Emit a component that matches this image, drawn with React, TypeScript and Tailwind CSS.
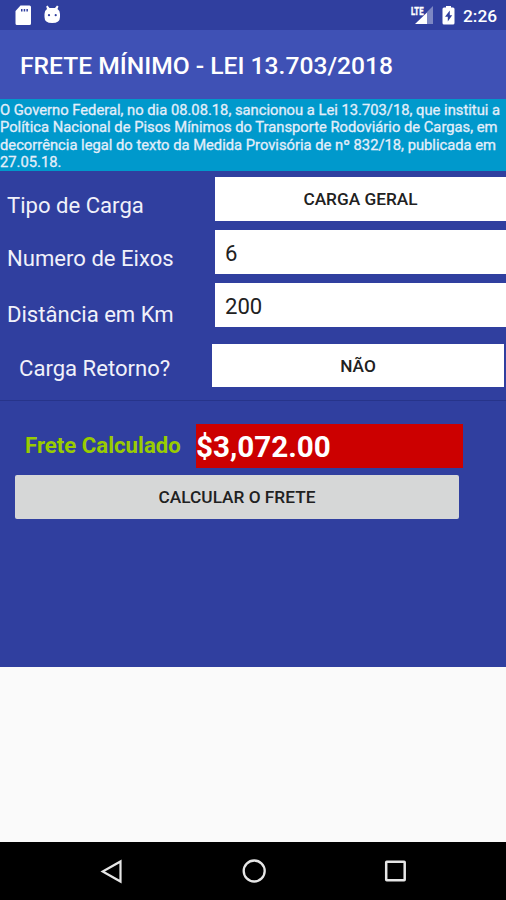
function StatusBar() {
  return (
    <div className="flex h-[30px] items-center bg-[#303f9f] pl-[14px] pr-[9px] text-white">
      <svg className="h-[30px] w-[19px]" viewBox="0 0 19 30" fill="currentColor">
        <path
          fillRule="evenodd"
          d="M6.500 5.500h9q1.500 0 1.500 1.500v16.500q0 1.500-1.500 1.500h-12.500q-1.500 0-1.500-1.500V11zM7 9v2.500h1.500V9zM9.700 9v2.500h1.500V9zM12.400 9v2.500h1.500V9z"
        />
      </svg>
      <svg className="ml-[9px] h-[30px] w-[22px]" viewBox="0 0 22 30">
        <path
          fill="currentColor"
          d="M5.500 5.500 7.500 8h5.500l2-2.500 1.500 1-1 2.500Q18 10.500 18 14v3q0 6-7.800 6T2.500 17v-3q0-3.500 2.500-5L4.200 6.500z"
        />
        <circle cx="7" cy="15.200" r="1.100" fill="#303f9f" />
        <circle cx="13.700" cy="15.200" r="1.100" fill="#303f9f" />
      </svg>
      <svg className="ml-auto h-[30px] w-[25px]" viewBox="0 0 25 30">
        <path d="M23 6v18h-6V12z" fill="#7d87c3" />
        <path d="M17 12.500V24H5z" fill="currentColor" />
        <text
          x="1"
          y="14.500"
          fill="currentColor"
          stroke="currentColor"
          strokeWidth=".4"
          fontFamily="Roboto, sans-serif"
          fontSize="10.500"
          fontWeight="700"
          textLength="12.500"
          lengthAdjust="spacingAndGlyphs"
        >
          LTE
        </text>
      </svg>
      <svg className="ml-[7px] h-[30px] w-[13px]" viewBox="0 0 13 30">
        <path
          d="M4 6h5v1.500h2q1.500 0 1.500 1.500v14q0 1.500-1.500 1.500H2Q.5 24.500.5 23V9Q.5 7.500 2 7.500h2z"
          fill="currentColor"
        />
        <path d="M7.800 10.500 3 16.800h2.800v4.700l4.400-6.300H7.800z" fill="#303f9f" />
      </svg>
      <span className="ml-[8px] pt-px text-[17.250px] font-medium leading-[30px]">
        2:26
      </span>
    </div>
  );
}

function NavigationBar() {
  return (
    <div className="flex h-[58px] items-center justify-between bg-black pl-[98px] pr-[97px] text-[#e6e6e6]">
      <svg className="size-7" viewBox="0 0 28 28" fill="none" stroke="currentColor" strokeWidth="2.200">
        <path d="M22.500 4.500v20L4.700 14.500z" />
      </svg>
      <svg className="size-7" viewBox="0 0 28 28" fill="none" stroke="currentColor" strokeWidth="2.300">
        <circle cx="14.200" cy="14" r="10.500" />
      </svg>
      <svg className="size-7" viewBox="0 0 28 28" fill="none" stroke="currentColor" strokeWidth="2.500">
        <rect x="5.200" y="4.700" width="18.500" height="18.500" rx=".5" />
      </svg>
    </div>
  );
}

function App() {
  return (
    <div
      className="flex h-[900px] w-[506px] flex-col overflow-hidden bg-[#fafafa]"
      style={{ fontFamily: "Roboto, sans-serif" }}
    >
      <StatusBar />
      <header className="flex h-[69px] items-center bg-[#3f51b5] pl-5">
        <h1 className="whitespace-nowrap pt-1 text-[24.640px] font-medium text-white">
          FRETE MÍNIMO - LEI 13.703/2018
        </h1>
      </header>
      <main className="h-[568px] bg-[#303f9f]">
        <p className="h-[72px] whitespace-nowrap bg-[#0099cc] pt-[3px] text-[14.750px] leading-[17.300px] text-[#e4eefa] [-webkit-text-stroke:0.3px_#e4eefa]">
          O Governo Federal, no dia 08.08.18, sancionou a Lei 13.703/18, que institui a
          <br />
          Política Nacional de Pisos Mínimos do Transporte Rodoviário de Cargas, em
          <br />
          decorrência legal do texto da Medida Provisória de nº 832/18, publicada em
          <br />
          27.05.18.
        </p>
        <div className="flex flex-col gap-[9px] pt-[6px] text-[22.100px]">
          <div className="flex h-[44px]">
            <label className="w-[215px] pl-[7px] leading-[57px] text-[#f0f1fa]">
              Tipo de Carga
            </label>
            <button className="flex-1 bg-white pt-[2px] text-[17.250px] font-medium text-[#212121]">
              CARGA GERAL
            </button>
          </div>
          <div className="flex h-[44px]">
            <label className="w-[215px] pl-[7px] leading-[56px] text-[#f0f1fa]">
              Numero de Eixos
            </label>
            <div className="flex-1 bg-white pl-[10px] leading-[46px] text-[#212121]">
              6
            </div>
          </div>
          <div className="flex h-[44px]">
            <label className="w-[215px] pl-[7px] leading-[62px] text-[#f0f1fa]">
              Distância em Km
            </label>
            <div className="flex-1 bg-white pl-[10px] leading-[46px] text-[#212121]">
              200
            </div>
          </div>
        </div>
        <div className="mt-[17px] flex h-[43px] pr-[2px]">
          <label className="w-[212px] pl-[19px] text-[22.100px] leading-[49px] text-[#f0f1fa]">
            Carga Retorno?
          </label>
          <button className="flex-1 bg-white pt-[2px] text-[17.250px] font-medium text-[#212121]">
            NÃO
          </button>
        </div>
        <div className="mt-[13px] h-px bg-[#27348a]"></div>
        <div className="mt-[23px] flex h-[44px] font-bold">
          <span className="w-[196px] pl-[25px] text-[22.200px] leading-[42px] text-[#99cc00]">
            Frete Calculado
          </span>
          <span className="w-[267px] bg-[#cc0000] text-[29.600px] leading-[46px] text-white">
            $3,072.00
          </span>
        </div>
        <button className="ml-[15px] mt-[7px] h-[44px] w-[444px] rounded-[2px] bg-[#d6d7d7] pt-[2px] text-[17.250px] font-medium text-[#212121]">
          CALCULAR O FRETE
        </button>
      </main>
      <div className="flex-1"></div>
      <NavigationBar />
    </div>
  );
}

export default App;
